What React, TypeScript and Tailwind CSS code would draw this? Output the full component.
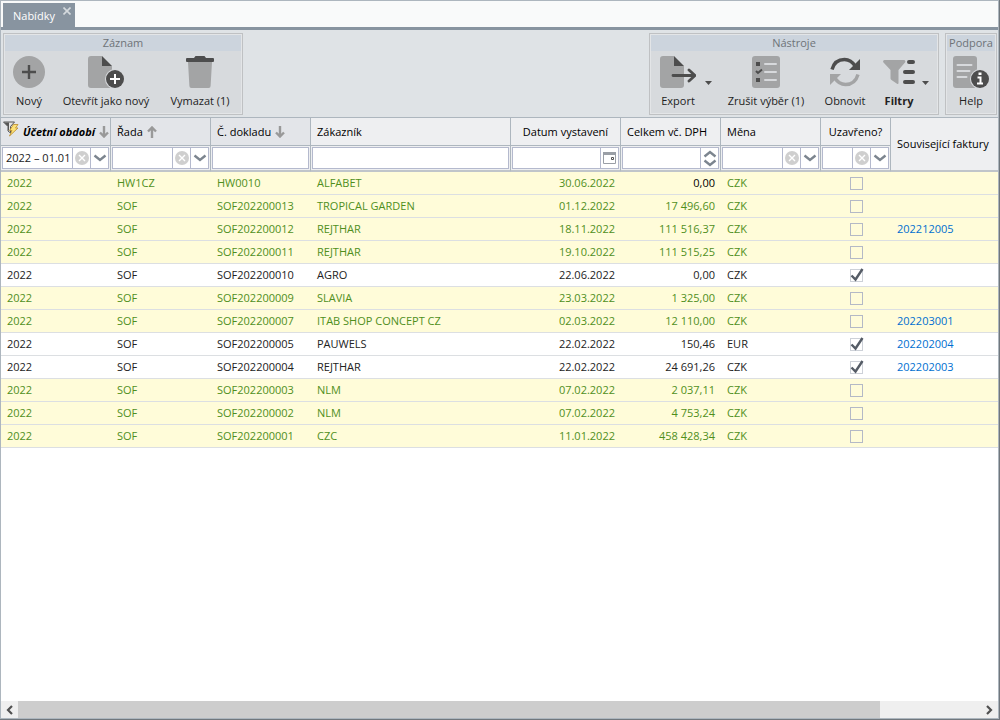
import type { ReactNode } from "react";
import clsx from "clsx";

type Row = {
  year: string;
  series: string;
  doc: string;
  customer: string;
  date: string;
  total: string;
  currency: string;
  closed?: boolean;
  invoice?: string;
};

const rows: Row[] = [
  { year: "2022", series: "HW1CZ", doc: "HW0010", customer: "ALFABET", date: "30.06.2022", total: "0,00", currency: "CZK" },
  { year: "2022", series: "SOF", doc: "SOF202200013", customer: "TROPICAL GARDEN", date: "01.12.2022", total: "17 496,60", currency: "CZK" },
  { year: "2022", series: "SOF", doc: "SOF202200012", customer: "REJTHAR", date: "18.11.2022", total: "111 516,37", currency: "CZK", invoice: "202212005" },
  { year: "2022", series: "SOF", doc: "SOF202200011", customer: "REJTHAR", date: "19.10.2022", total: "111 515,25", currency: "CZK" },
  { year: "2022", series: "SOF", doc: "SOF202200010", customer: "AGRO", date: "22.06.2022", total: "0,00", currency: "CZK", closed: true },
  { year: "2022", series: "SOF", doc: "SOF202200009", customer: "SLAVIA", date: "23.03.2022", total: "1 325,00", currency: "CZK" },
  { year: "2022", series: "SOF", doc: "SOF202200007", customer: "ITAB SHOP CONCEPT CZ", date: "02.03.2022", total: "12 110,00", currency: "CZK", invoice: "202203001" },
  { year: "2022", series: "SOF", doc: "SOF202200005", customer: "PAUWELS", date: "22.02.2022", total: "150,46", currency: "EUR", closed: true, invoice: "202202004" },
  { year: "2022", series: "SOF", doc: "SOF202200004", customer: "REJTHAR", date: "22.02.2022", total: "24 691,26", currency: "CZK", closed: true, invoice: "202202003" },
  { year: "2022", series: "SOF", doc: "SOF202200003", customer: "NLM", date: "07.02.2022", total: "2 037,11", currency: "CZK" },
  { year: "2022", series: "SOF", doc: "SOF202200002", customer: "NLM", date: "07.02.2022", total: "4 753,24", currency: "CZK" },
  { year: "2022", series: "SOF", doc: "SOF202200001", customer: "CZC", date: "11.01.2022", total: "458 428,34", currency: "CZK" },
];

const NewIcon = () => (
  <svg width="32" height="32" viewBox="0 0 32 32">
    <circle cx="16" cy="16" r="16" fill="#a3a4a5" />
    <path d="M16 9v14M9 16h14" stroke="#4d4d4d" strokeWidth="2.4" />
  </svg>
);

const CopyIcon = () => (
  <svg width="36" height="32" viewBox="0 0 36 32">
    <path d="M3 0h11v10h10v22H3a3 3 0 0 1-3-3V3a3 3 0 0 1 3-3z" fill="#a3a4a5" />
    <path d="M14 0l10 10H14z" fill="#4d4d4d" />
    <circle cx="27" cy="23" r="10" fill="#d7d9dc" />
    <circle cx="27" cy="23" r="9" fill="#4d4d4d" />
    <path d="M27 18v10M22 23h10" stroke="#fff" strokeWidth="2" />
  </svg>
);

const TrashIcon = () => (
  <svg width="28" height="32" viewBox="0 0 28 32">
    <path d="M2 6h24l-1.400 24a2 2 0 0 1-2 2H5.400a2 2 0 0 1-2-2z" fill="#a3a4a5" />
    <path d="M1 2h7l1.500-2h9L20 2h7a1 1 0 0 1 1 1v2a1 1 0 0 1-1 1H1a1 1 0 0 1-1-1V3a1 1 0 0 1 1-1z" fill="#4d4d4d" />
  </svg>
);

const ExportIcon = () => (
  <svg width="36" height="32" viewBox="0 0 36 32">
    <path d="M3 0h11v10h10v19a3 3 0 0 1-3 3H3a3 3 0 0 1-3-3V3a3 3 0 0 1 3-3z" fill="#a3a4a5" />
    <path d="M14 0l10 10H14z" fill="#4d4d4d" />
    <path d="M13 19.500h21M29 14l6 5.500-6 5.500" fill="none" stroke="#4d4d4d" strokeWidth="2.800" strokeLinejoin="round" strokeLinecap="round" />
  </svg>
);

const ChecklistIcon = () => (
  <svg width="28" height="32" viewBox="0 0 28 32">
    <rect width="28" height="32" rx="3" fill="#a3a4a5" />
    <path d="M4 6h4v4H4zM4 22h4v4H4z" fill="#4d4d4d" />
    <path d="M4 15l2 2 4-3.500" fill="none" stroke="#4d4d4d" strokeWidth="2" />
    <path d="M13 8h11M13 16h11M13 24h11" stroke="#d7d9dc" strokeWidth="2" strokeLinecap="round" />
  </svg>
);

const RefreshIcon = () => (
  <svg width="32" height="32" viewBox="0 0 32 32">
    <path d="M3 13.500C5 6 10 3.500 15.500 3.500c5 0 8.500 3 11 7" fill="none" stroke="#4d4d4d" strokeWidth="3.400" />
    <path d="M31 3v11H20z" fill="#4d4d4d" />
    <path d="M29 18.500c-2 7-7 10-12.500 10-5 0-8.500-3-11-7" fill="none" stroke="#a3a4a5" strokeWidth="3.400" />
    <path d="M1 29V18h11z" fill="#a3a4a5" />
  </svg>
);

const FilterIcon = () => (
  <svg width="33" height="32" viewBox="0 0 33 32">
    <path d="M1.500 4H21a1.500 1.500 0 0 1 1 2.500L15.500 14v13a1 1 0 0 1-1.500.800L8.500 24a2 2 0 0 1-1-2v-8L.500 6.500A1.500 1.500 0 0 1 1.500 4z" fill="#a3a4a5" />
    <path d="M26 6h4M22 16h8M22 26h8" stroke="#4d4d4d" strokeWidth="4" strokeLinecap="round" />
  </svg>
);

const HelpIcon = () => (
  <svg width="36" height="32" viewBox="0 0 36 32">
    <rect width="24" height="32" rx="3" fill="#a3a4a5" />
    <path d="M4.500 9h14M4.500 15h12M4.500 21h9" stroke="#d7d9dc" strokeWidth="2" strokeLinecap="round" />
    <circle cx="27" cy="23" r="10" fill="#d7d9dc" />
    <circle cx="27" cy="23" r="9" fill="#4d4d4d" />
    <path d="M24.500 21.500h3v6M24 27.500h6" fill="none" stroke="#fff" strokeWidth="2" />
    <path d="M25.500 16.500h3v2.500h-3z" fill="#fff" />
  </svg>
);

const FunnelBoltIcon = () => (
  <svg width="16" height="16" viewBox="0 0 16 16" className="shrink-0">
    <path d="M.5 1h11L7.500 5.500V12L5 10V5.500z" fill="#e4e4e4" stroke="#555" />
    <path d="M1 1.500h5v8L5 9V5.500z" fill="#555" />
    <path d="M10.500 3.500H15l-2.500 3.500H15L6.500 15l2.500-5.500H6.500z" fill="#fde277" stroke="#b98a28" strokeWidth="0.800" />
  </svg>
);

const SortArrow = ({ up }: { up?: boolean }) => (
  <svg width="10" height="12" viewBox="0 0 10 12" className={clsx("shrink-0", up && "rotate-180")}>
    <path d="M5 0v10M1 6.500l4 4 4-4" fill="none" stroke="#999" strokeWidth="2.400" />
  </svg>
);

const Chevron = ({ className }: { className?: string }) => (
  <svg width="14" height="8" viewBox="0 0 14 8" className={className}>
    <path d="M1.500 1.500L7 6l5.500-4.500" fill="none" stroke="#7c858f" strokeWidth="2.400" />
  </svg>
);

function ToolButton({ icon, label, className }: { icon: ReactNode; label: string; className: string }) {
  return (
    <button type="button" className={clsx("flex flex-col items-center gap-[5px] pt-[5px]", className)}>
      {icon}
      <span className="whitespace-nowrap leading-4">{label}</span>
    </button>
  );
}

function MoreButton({ label, className }: { label: string; className: string }) {
  return (
    <button type="button" aria-label={label} className={clsx("flex h-full items-end pb-7", className)}>
      <svg width="7" height="4" viewBox="0 0 7 4">
        <path d="M0 0h7L3.500 4z" fill="#4d4d4d" />
      </svg>
    </button>
  );
}

function ToolGroup({ title, children }: { title: string; children: ReactNode }) {
  return (
    <section className="border border-[#bfc1c3] bg-[#d7dadd] p-px ring-1 ring-inset ring-[#e3e5e7]">
      <h2 className="bg-[#ccd4dd] text-center leading-4 text-[#6e7378]">{title}</h2>
      <div className="flex h-[62px] items-start text-[#222]">{children}</div>
    </section>
  );
}

type FilterProps = { label: string; kind: "text" | "select" | "date" | "number"; value?: string };

function FilterField({ label, kind, value }: FilterProps) {
  const side = "flex h-full w-[18px] shrink-0 items-center justify-center border-l border-[#b4b9cd]";
  return (
    <div className="flex h-[22px] border border-[#b4b9cd] bg-white">
      <input type="text" aria-label={label} defaultValue={value} className="min-w-0 flex-1 px-[3px] text-[#222] outline-none" />
      {kind === "select" && (
        <>
          <button type="button" aria-label={`Vymazat ${label}`} className={side}>
            <svg width="14" height="14" viewBox="0 0 14 14">
              <circle cx="7" cy="7" r="7" fill="#cfcfcf" />
              <path d="M4 4l6 6M10 4l-6 6" stroke="#fff" strokeWidth="1.400" />
            </svg>
          </button>
          <button type="button" aria-label={`Vybrat ${label}`} className={side}>
            <Chevron />
          </button>
        </>
      )}
      {kind === "date" && (
        <button type="button" aria-label="Kalendář" className={side}>
          <svg width="13" height="12" viewBox="0 0 13 12">
            <path d="M.5.5h12v11H.5z" fill="#fff" stroke="#9a9fa6" />
            <path d="M0 0h13v3H0z" fill="#9a9fa6" />
            <path d="M8.500 5.500h2v2h-2z" fill="none" stroke="#555" />
          </svg>
        </button>
      )}
      {kind === "number" && (
        <button type="button" aria-label="Změnit hodnotu" className={clsx(side, "flex-col gap-px")}>
          <Chevron className="rotate-180" />
          <Chevron />
        </button>
      )}
    </div>
  );
}

const filters: FilterProps[] = [
  { label: "Účetní období", kind: "select", value: "2022 – 01.01" },
  { label: "Řada", kind: "select" },
  { label: "Č. dokladu", kind: "text" },
  { label: "Zákazník", kind: "text" },
  { label: "Datum vystavení", kind: "date" },
  { label: "Celkem vč. DPH", kind: "number" },
  { label: "Měna", kind: "select" },
  { label: "Uzavřeno?", kind: "select" },
];

function ClosedBox({ checked, label }: { checked?: boolean; label: string }) {
  return (
    <span className="relative ml-[29px] block size-[13px]">
      <input
        type="checkbox"
        aria-label={label}
        defaultChecked={checked}
        className="peer block size-[13px] appearance-none border border-[#b4b9c6] checked:border-[#cdd1d8]"
      />
      <svg width="14" height="14" viewBox="0 0 14 14" className="pointer-events-none absolute -top-px left-0 hidden peer-checked:block">
        <path d="M1.500 7.500l4 4L12.500 1" fill="none" stroke="#555c66" strokeWidth="2.400" />
      </svg>
    </span>
  );
}

function OfferRow({ row, first }: { row: Row; first: boolean }) {
  return (
    <tr
      className={clsx(
        "h-[23px] [&>td]:border-b [&>td]:border-[#dcdfe2] [&>td]:pl-1.5 [&>td]:whitespace-nowrap",
        row.closed ? "bg-white text-[#222]" : "bg-[#fffcd9] text-[#4f8f1c]",
      )}
    >
      <td>{row.year}</td>
      <td>{row.series}</td>
      <td>{row.doc}</td>
      <td>{row.customer}</td>
      <td className="pr-1.5 text-right">{row.date}</td>
      <td className={clsx("pr-1.5 text-right", first && "text-black")}>{row.total}</td>
      <td>{row.currency}</td>
      <td className="pl-0!">
        <ClosedBox checked={row.closed} label={`Uzavřeno ${row.doc}`} />
      </td>
      <td>
        {row.invoice && (
          <a href={`#${row.invoice}`} className="text-[#006fd0]">
            {row.invoice}
          </a>
        )}
      </td>
    </tr>
  );
}

function OffersTable() {
  const th = "border-r border-b border-[#adb6be] font-normal whitespace-nowrap";
  const left = "pl-1.5 text-left";
  return (
    <table className="w-full min-w-[997px] table-fixed border-separate border-spacing-0">
      <colgroup>
        <col className="w-[110px]" />
        <col className="w-[100px]" />
        <col className="w-[100px]" />
        <col className="w-[200px]" />
        <col className="w-[110px]" />
        <col className="w-[100px]" />
        <col className="w-[100px]" />
        <col className="w-[70px]" />
        <col />
      </colgroup>
      <thead className="bg-[#eeeff1] text-black">
        <tr className="h-7">
          <th className={clsx(th, "bg-[#e3e5e9] pl-0.5")}>
            <span className="flex items-center">
              <span className="mr-1 -mt-1.5">
                <FunnelBoltIcon />
              </span>
              <b className="mr-1 italic">Účetní období</b>
              <SortArrow />
            </span>
          </th>
          <th className={clsx(th, left, "bg-[#e3e5e9]")}>
            <span className="flex items-center gap-1">
              Řada <SortArrow up />
            </span>
          </th>
          <th className={clsx(th, left, "bg-[#e3e5e9]")}>
            <span className="flex items-center gap-1">
              Č. dokladu <SortArrow />
            </span>
          </th>
          <th className={clsx(th, left)}>Zákazník</th>
          <th className={clsx(th, "text-center")}>Datum vystavení</th>
          <th className={clsx(th, left)}>Celkem vč. DPH</th>
          <th className={clsx(th, left)}>Měna</th>
          <th className={clsx(th, "text-center")}>Uzavřeno?</th>
          <th rowSpan={2} className="border-b-2 border-[#c0c5ca] pl-1.5 text-left font-normal whitespace-nowrap">
            Související faktury
          </th>
        </tr>
        <tr className="h-[26px]">
          {filters.map((f) => (
            <td key={f.label} className="border-r border-b-2 border-r-[#adb6be] border-b-[#c0c5ca] p-px">
              <FilterField {...f} />
            </td>
          ))}
        </tr>
      </thead>
      <tbody>
        {rows.map((row, i) => (
          <OfferRow key={row.doc} row={row} first={i === 0} />
        ))}
      </tbody>
    </table>
  );
}

function ScrollButton({ label, right }: { label: string; right?: boolean }) {
  return (
    <button type="button" aria-label={label} className="flex w-[17px] shrink-0 items-center justify-center bg-[#efefef]">
      <svg width="7" height="10" viewBox="0 0 7 10" className={right ? "rotate-180" : undefined}>
        <path d="M6 1L2 5l4 4" fill="none" stroke="#505050" strokeWidth="2.200" />
      </svg>
    </button>
  );
}

export default function App() {
  return (
    <div className="flex min-h-screen bg-[#70777d] pr-px pb-px font-['Open_Sans','Noto_Sans',sans-serif] text-[11px] leading-4">
      <div className="flex min-w-0 flex-1 flex-col border border-[#adb6be] bg-white">
        <header className="flex border-b-3 border-[#8894a0] bg-[#f9fafa] pt-0.5 pl-0.5">
          <div className="flex h-6 items-start bg-[#8894a0] pr-1 pl-2.5 text-white">
            <span className="mr-2 pt-[5px] font-medium">Nabídky</span>
            <button type="button" aria-label="Zavřít" className="pt-1">
              <svg width="8" height="8" viewBox="0 0 8 8">
                <path d="M.5.5l7 7M7.500.500l-7 7" stroke="#d5dade" strokeWidth="1.600" />
              </svg>
            </button>
          </div>
        </header>

        <div className="flex justify-between border-b border-[#adb6be] bg-[#dfe3e6] pt-[3px] pr-px pb-0.5 pl-0.5">
          <ToolGroup title="Záznam">
            <ToolButton icon={<NewIcon />} label="Nový" className="w-12" />
            <ToolButton icon={<CopyIcon />} label="Otevřít jako nový" className="w-[106px]" />
            <ToolButton icon={<TrashIcon />} label="Vymazat (1)" className="w-[82px]" />
          </ToolGroup>
          <div className="flex gap-1.5">
            <ToolGroup title="Nástroje">
              <ToolButton icon={<ExportIcon />} label="Export" className="w-[54px]" />
              <MoreButton label="Možnosti exportu" className="w-[13px]" />
              <ToolButton icon={<ChecklistIcon />} label="Zrušit výběr (1)" className="w-24" />
              <ToolButton icon={<RefreshIcon />} label="Obnovit" className="w-[62px]" />
              <ToolButton icon={<FilterIcon />} label="Filtry" className="w-[46px] font-bold" />
              <MoreButton label="Možnosti filtrů" className="w-[15px]" />
            </ToolGroup>
            <ToolGroup title="Podpora">
              <ToolButton icon={<HelpIcon />} label="Help" className="w-12" />
            </ToolGroup>
          </div>
        </div>

        <main className="flex-1 overflow-x-auto">
          <OffersTable />
        </main>

        <footer className="flex h-[17px]">
          <ScrollButton label="Posunout vlevo" />
          <div className="flex-1 bg-[#efefef]">
            <div className="h-full w-[89.5%] bg-[#cdcdcd]" />
          </div>
          <ScrollButton label="Posunout vpravo" right />
        </footer>
      </div>
    </div>
  );
}
